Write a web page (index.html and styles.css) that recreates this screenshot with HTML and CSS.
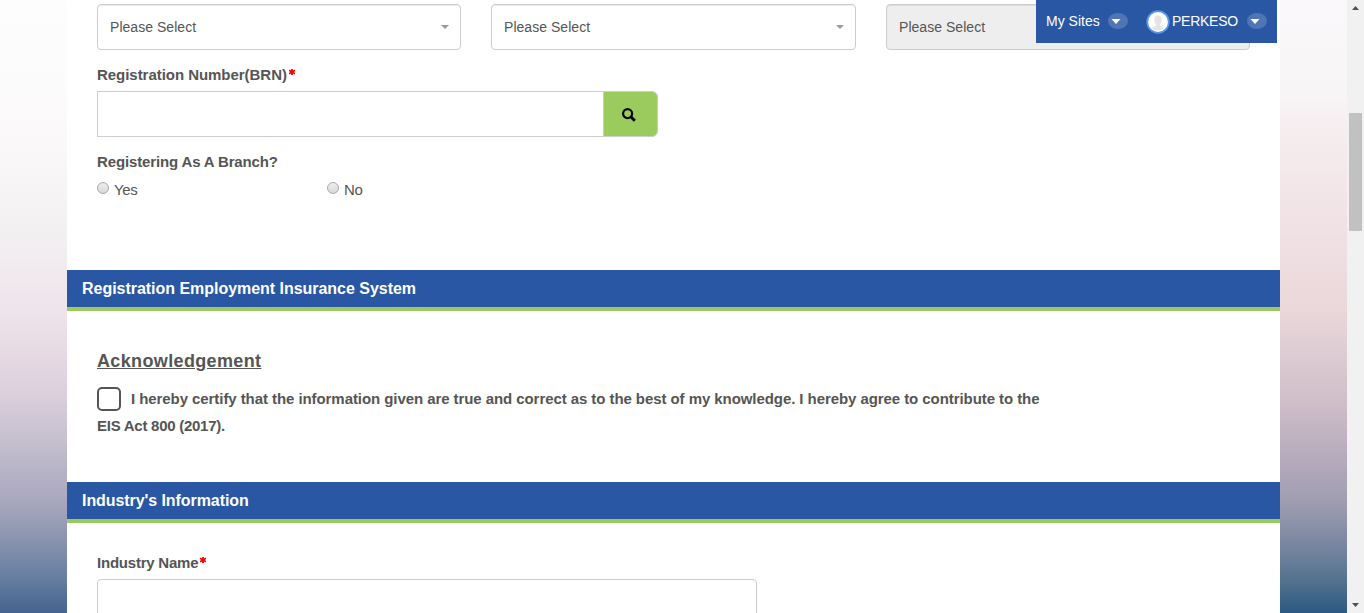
FILE: index.html
```html
<!DOCTYPE html>
<html lang="en">
<head>
<meta charset="utf-8">
<title>Employer Registration</title>
<link rel="stylesheet" href="styles.css">
</head>
<body>
<div class="gutter gutter-left"></div>
<main class="page">
  <nav class="user-bar">
    <span class="sites">My Sites</span>
    <span class="toggle toggle-sites"><svg width="10" height="5" viewBox="0 0 10 5"><path d="M0.5 0h9L5 5z" fill="#fff"/></svg></span>
    <svg class="avatar" width="24" height="24" viewBox="0 0 24 24"><circle cx="12" cy="12" r="10.8" fill="#fff" stroke="#5596e6" stroke-width="1.8"/><path d="M12 5.5c-3 0-4 2.300-3.700 5 .2 1.800.8 3 1.700 3.800v1.700l-4.300 2a9 9 0 0 0 12.600 0l-4.300-2v-1.700c.9-.8 1.500-2 1.700-3.800.3-2.700-.7-5-3.700-5z" fill="#e4e4e4"/></svg>
    <span class="account">PERKESO</span>
    <span class="toggle toggle-account"><svg width="10" height="5" viewBox="0 0 10 5"><path d="M0.5 0h9L5 5z" fill="#fff"/></svg></span>
  </nav>
  <section class="employer">
    <div class="selects">
      <div class="select"><span>Please Select</span><i class="caret"></i></div>
      <div class="select"><span>Please Select</span><i class="caret"></i></div>
      <div class="select select-disabled"><span>Please Select</span></div>
    </div>
    <label class="label label-brn">Registration Number(BRN)<svg class="required" width="6" height="6" viewBox="0 0 6 6"><path d="M3 0v6M0 1.300l6 3.400M6 1.300L0 4.700" stroke="#f00" stroke-width="1.800"/></svg></label>
    <div class="search">
      <div class="search-input"></div>
      <button class="search-button" aria-label="Search"><svg width="14" height="14" viewBox="0 0 14 14" fill="none" stroke="#000"><circle cx="5.600" cy="5.600" r="4.500" stroke-width="2.200"/><path d="M8.800 8.800l4 4" stroke-width="2.800"/></svg></button>
    </div>
    <div class="label label-branch">Registering As A Branch?</div>
    <div class="radios">
      <label class="radio"><i class="dot"></i><span>Yes</span></label>
      <label class="radio"><i class="dot"></i><span>No</span></label>
    </div>
  </section>
  <h2 class="heading"><span class="heading-eis">Registration Employment Insurance System</span></h2>
  <section class="acknowledgement">
    <h3 class="subheading">Acknowledgement</h3>
    <div class="agree"><i class="checkbox"></i><span class="line-one">I hereby certify that the information given are true and correct as to the best of my knowledge. I hereby agree to contribute to the</span></div>
    <div class="line-two">EIS Act 800 (2017).</div>
  </section>
  <h2 class="heading"><span class="heading-industry">Industry's Information</span></h2>
  <section class="industry">
    <label class="label label-industry">Industry Name<svg class="required" width="6" height="6" viewBox="0 0 6 6"><path d="M3 0v6M0 1.300l6 3.400M6 1.300L0 4.700" stroke="#f00" stroke-width="1.800"/></svg></label>
    <div class="text-input"></div>
  </section>
</main>
<div class="gutter gutter-right"></div>
<div class="scrollbar">
  <svg class="arrow" width="7" height="4" viewBox="0 0 7 4"><path d="M3.500 0L7 4H0z" fill="#505050"/></svg>
  <div class="thumb"></div>
  <svg class="arrow" width="7" height="4" viewBox="0 0 7 4"><path d="M0 0h7L3.500 4z" fill="#505050"/></svg>
</div>
</body>
</html>
```
FILE: styles.css
```css
* { box-sizing: border-box; }
body {
  margin: 0;
  height: 613px;
  overflow: hidden;
  display: grid;
  grid-template-columns: 67px 1213px 67px 17px;
  font: 15px/20px "Liberation Sans", Arial, sans-serif;
  color: #555;
}
.gutter { height: 613px; }
.gutter-left {
  background: linear-gradient(#fdfdfd 0, #fdfcfd 70px, #faf7f8 160px, #f2eff1 240px, #eee4eb 310px, #e3d6e0 365px, #d9cedb 400px, #c5bfce 440px, #aaa8bf 500px, #8993af 540px, #647da0 580px, #45638e 613px);
}
.gutter-right {
  background: linear-gradient(#faf8fa 0, #f8f5f6 95px, #f6eef0 125px, #f3e7e9 180px, #efdee1 260px, #e9d7da 310px, #dbcad1 360px, #cfbdc8 405px, #b9adbe 450px, #a19eb1 500px, #7d89a3 540px, #54738e 580px, #2c5982 613px);
}
.page { position: relative; height: 613px; overflow: hidden; background: #fff; }
.employer { height: 270px; padding: 4px 30px 0; }
.selects { display: grid; grid-template-columns: 364px 365px 364px; gap: 30px; }
.select {
  display: flex;
  align-items: center;
  justify-content: space-between;
  height: 46px;
  padding: 0 11px 0 12px;
  border: 1px solid #ccc;
  border-radius: 4px;
  box-shadow: inset 0 1px 1px rgba(0, 0, 0, .075);
  font-size: 14px;
  letter-spacing: .04px;
}
.select-disabled { background: #eee; }
.caret { border: 4px solid transparent; border-top-color: #999; border-bottom: 0; }
.label { display: flex; font-weight: bold; }
.required { margin: 4px 0 0 2px; }
.label-brn { margin-top: 15px; letter-spacing: -.04px; }
.search { display: flex; width: 561px; height: 46px; margin-top: 6px; }
.search-input { flex: 1; border: 1px solid #ccc; border-right: 0; }
.search-button {
  display: flex;
  align-items: center;
  justify-content: center;
  width: 55px;
  padding: 2px 3px 0 0;
  border: 1px solid #ccc;
  border-radius: 0 6px 6px 0;
  background: #9bcb5d;
}
.label-branch { margin-top: 15px; letter-spacing: -.14px; }
.radios { display: grid; grid-template-columns: 230px 230px; margin-top: 8px; }
.radio { display: flex; gap: 5px; letter-spacing: -.3px; }
.dot {
  width: 12px;
  height: 12px;
  margin-top: 2px;
  border: 1px solid #a9a9a9;
  border-radius: 50%;
  background: linear-gradient(#eee, #d9d9d9);
}
.heading {
  height: 41px;
  margin: 0;
  padding: 0 15px;
  border-bottom: 4px solid #9bcb5d;
  background: #2957a4;
  color: #fff;
  font-size: 16px;
  line-height: 37px;
}
.heading-eis { letter-spacing: -.03px; }
.heading-industry { letter-spacing: -.07px; }
.acknowledgement { height: 171px; padding: 39px 30px 0; }
.subheading { margin: 0; font-size: 18px; line-height: 22px; letter-spacing: .36px; text-decoration: underline; }
.agree { display: flex; align-items: center; gap: 10px; margin-top: 15px; height: 24px; font-weight: bold; white-space: nowrap; }
.checkbox { width: 24px; height: 24px; border: 2px solid #555; border-radius: 5px; }
.line-two { margin-top: 5px; font-weight: bold; letter-spacing: -.26px; }
.line-one { letter-spacing: -.07px; }
.industry { padding: 30px 30px 0; }
.label-industry { letter-spacing: -.22px; }
.text-input { width: 660px; height: 46px; margin-top: 6px; border: 1px solid #ccc; border-radius: 4px; }
.user-bar {
  position: absolute;
  top: 0;
  right: 3px;
  display: flex;
  width: 241px;
  height: 43px;
  padding-left: 10px;
  background: #2957a4;
  color: #fff;
  font-size: 14px;
  line-height: 43px;
  white-space: nowrap;
}
.sites { width: 62px; }
.toggle {
  display: flex;
  align-items: center;
  justify-content: center;
  width: 20px;
  height: 16px;
  margin-top: 13px;
  padding-right: 4px;
  border-radius: 50%;
  background: #4f75b4;
}
.avatar { margin: 10px 2px 0 18px; }
.account { width: 75px; letter-spacing: -.25px; }
.scrollbar { display: flex; flex-direction: column; align-items: center; height: 613px; padding: 6px 2px 6px; background: #f1f1f1; }
.thumb { width: 13px; height: 118px; margin: 103px 0 auto; background: #c1c1c1; }
```
